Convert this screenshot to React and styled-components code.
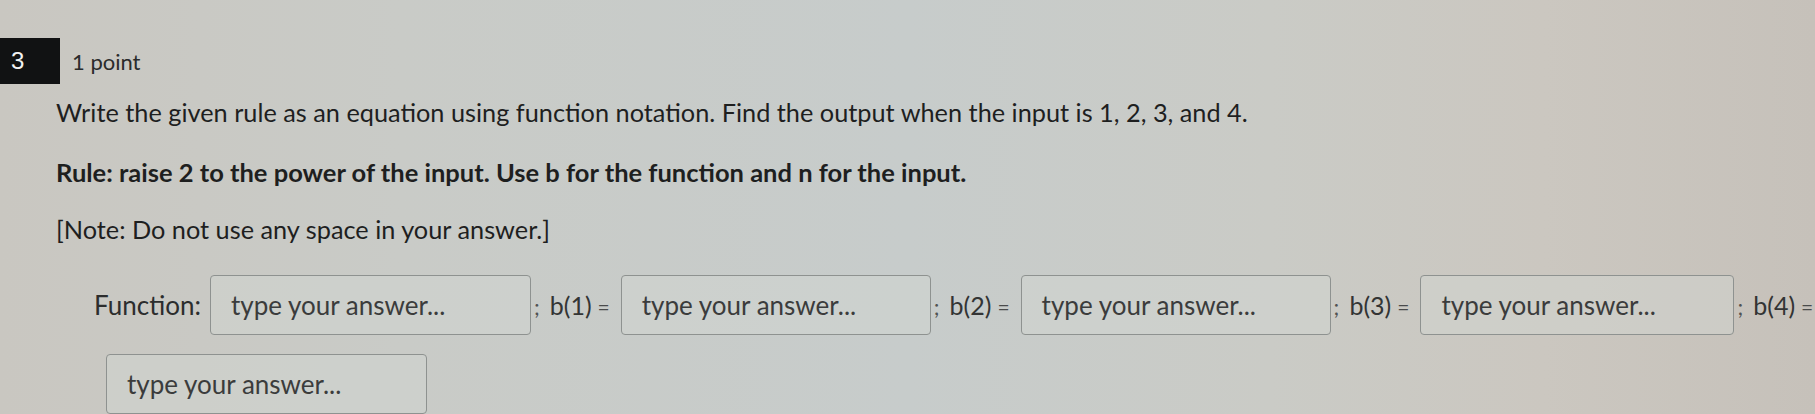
import React from "react";
import styled, { createGlobalStyle } from "styled-components";

const Global = createGlobalStyle`
  html, body { margin: 0; padding: 0; }
  body {
    width: 1815px;
    height: 414px;
    overflow: hidden;
    font-family: Lato, "Open Sans", "Liberation Sans", sans-serif;
    background: linear-gradient(90deg, #c9c7c1 0%, #c9cbc7 22%, #c7cccb 50%, #cacbc6 70%, #cbc7c0 85%, #c6c1ba 100%);
  }
`;

const Page = styled.div`
  height: 414px;
  box-sizing: border-box;
  padding-top: 38px;
  color: #1f2020;
`;

const Header = styled.div`
  display: flex;
  align-items: center;
  height: 46px;
`;

const Badge = styled.div`
  width: 60px;
  height: 46px;
  background: #111213;
  color: #f2f2f2;
  font-family: "Liberation Sans", Arial, sans-serif;
  font-size: 24px;
  display: flex;
  align-items: center;
  padding-left: 11px;
  box-sizing: border-box;
`;

const Points = styled.span`
  margin-left: 12px;
  font-size: 22px;
  color: #2a2b2b;
`;

const Body = styled.div`
  padding-left: 56px;
`;

const Prompt = styled.p`
  margin: ${(p) => p.$top}px 0 0;
  font-size: ${(p) => (p.$bold ? 25.5 : 25.3)}px;
  line-height: 28px;
  font-weight: ${(p) => (p.$bold ? 700 : 400)};
  color: #1e1f1f;
  white-space: nowrap;
`;

const AnswerRow = styled.div`
  display: flex;
  align-items: center;
  flex-wrap: nowrap;
  white-space: nowrap;
  margin-top: ${(p) => p.$top}px;
  padding-left: ${(p) => p.$indent}px;
`;

const Label = styled.span`
  flex-shrink: 0;
  font-size: 26px;
  color: #2c2d2d;
  margin-right: 9px;
`;

const Sep = styled.span`
  flex-shrink: 0;
  font-size: 25px;
  color: #333434;
  padding: 0 11px 0 3px;
  display: inline-flex;
  align-items: baseline;
  gap: 10px;
`;

const Semi = styled.span`
  color: #505252;
  font-size: 22px;
`;

const Eq = styled.span`
  font-size: 21px;
  margin-left: 6px;
  color: #4a4b4b;
`;

const Input = styled.div`
  flex-shrink: 0;
  width: ${(p) => p.$w}px;
  height: 60px;
  box-sizing: border-box;
  border: 1.5px solid #8e9290;
  border-radius: 4px;
  background: rgba(210, 214, 211, 0.45);
  display: flex;
  align-items: center;
  padding-left: 20px;
  font-size: 26px;
  color: #3b3c3c;
`;

const Separator = ({ n }) => (
  <Sep>
    <Semi>;</Semi>
    <span>
      b({n})<Eq>=</Eq>
    </span>
  </Sep>
);

export default function App() {
  return (
    <>
      <Global />
      <Page>
        <Header>
          <Badge>3</Badge>
          <Points>1 point</Points>
        </Header>
        <Body>
          <Prompt $top={14}>
            Write the given rule as an equation using function notation. Find the output when the input is 1, 2, 3, and 4.
          </Prompt>
          <Prompt $top={32} $bold>
            Rule: raise 2 to the power of the input. Use b for the function and n for the input.
          </Prompt>
          <Prompt $top={29}>[Note: Do not use any space in your answer.]</Prompt>
          <AnswerRow $top={32} $indent={38}>
            <Label>Function:</Label>
            <Input $w={321}>type your answer...</Input>
            <Separator n={1} />
            <Input $w={310}>type your answer...</Input>
            <Separator n={2} />
            <Input $w={310}>type your answer...</Input>
            <Separator n={3} />
            <Input $w={314}>type your answer...</Input>
            <Separator n={4} />
          </AnswerRow>
          <AnswerRow $top={19} $indent={50}>
            <Input $w={321}>type your answer...</Input>
          </AnswerRow>
        </Body>
      </Page>
    </>
  );
}
